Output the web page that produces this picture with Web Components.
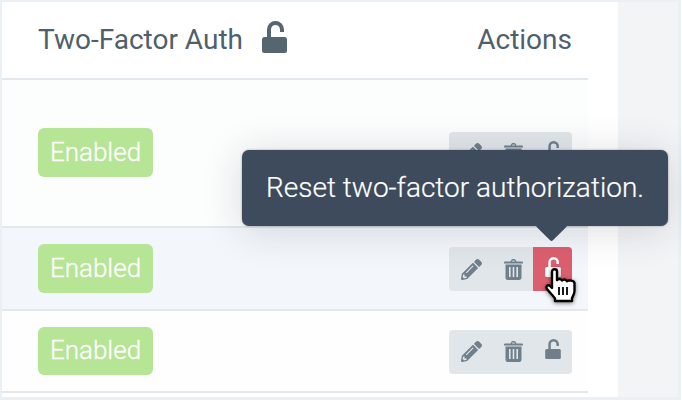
<!DOCTYPE html>
<html>
<head>
<meta charset="utf-8">
<style>
  html, body { margin: 0; height: 100%; background: #fff; }
  body { font-family: Roboto, "Liberation Sans", sans-serif; overflow: hidden; }
</style>
</head>
<body>
<auth-page>
  <auth-head></auth-head>
  <auth-row height="148" badge="49" style="--row-bg:#fcfdfd;--badge-nudge:1px"></auth-row>
  <auth-row height="83" badge="49" active style="--row-bg:#f3f6fa"></auth-row>
  <auth-row height="82" badge="48" style="--row-bg:#fefefe"></auth-row>
</auth-page>
<script>
const ICONS = {
  pencil: `<svg viewBox="0 0 512 512" width="21" height="21"><path fill="currentColor" d="M497.9 142.1l-46.1 46.1c-4.7 4.7-12.3 4.7-17 0l-111-111c-4.7-4.7-4.7-12.3 0-17l46.1-46.1c18.7-18.7 49.1-18.7 67.9 0l60.1 60.1c18.8 18.7 18.8 49.1 0 67.9zM284.2 99.8L21.6 362.4.4 483.9c-2.9 16.4 11.4 30.6 27.8 27.8l121.5-21.3 262.6-262.6c4.7-4.7 4.7-12.3 0-17l-111-111c-4.8-4.7-12.4-4.7-17.1 0zM124.1 339.9c-5.5-5.5-5.5-14.3 0-19.8l154-154c5.5-5.5 14.3-5.5 19.8 0s5.5 14.3 0 19.8l-154 154c-5.5 5.5-14.3 5.5-19.8 0zM88 424h48v36.3l-64.5 11.3-31.1-31.1L51.7 376H88v48z"/></svg>`,
  trash: `<svg viewBox="0 0 19 21" width="19" height="21"><path fill="currentColor" fill-rule="evenodd" d="M6.500 2.600 7.300 1C7.600.4 8.200 0 8.900 0h1.200c.7 0 1.300.4 1.600 1l.8 1.600h5.200c.7 0 1.300.4 1.300 1v.9H0v-.9c0-.6.6-1 1.300-1zM8 2.600h3l-.5-1.100H8.500zM1.500 5.500h16v13.300c0 1.200-.9 2.200-2 2.200h-12c-1.100 0-2-1-2-2.200zM5 8v10h1.600V8zm3.700 0v10h1.600V8zM12.400 8v10H14V8z"/></svg>`,
  lock: `<svg viewBox="0 0 25 32" width="25" height="32"><path fill="none" stroke="currentColor" stroke-width="4" d="M7 18V8.500a6.500 6.500 0 0 1 13 0V11"/><rect fill="currentColor" y="16" width="25" height="16" rx="2.500"/></svg>`,
  lockSmall: `<svg viewBox="0 0 25 32" width="16" height="20"><path fill="none" stroke="currentColor" stroke-width="4" d="M7 18V8.500a6.500 6.500 0 0 1 13 0V11"/><rect fill="currentColor" y="16" width="25" height="16" rx="2.500"/></svg>`
};

class AuthPage extends HTMLElement {
  constructor() {
    super();
    this.attachShadow({ mode: 'open' });
  }
  connectedCallback() {
    this.shadowRoot.innerHTML = `
      <style>
        :host { display: flex; padding: 2px 3px 3px 2px; height: 395px; width: 676px; background: #ebf0f5; }
        .card { width: 616px; background: #fff; flex: none; }
        .table { width: 586px; }
        .side { flex: 1; background: #f2f4f6; }
      </style>
      <div class="card"><div class="table"><slot></slot></div></div>
      <div class="side"></div>
    `;
  }
}

class AuthHead extends HTMLElement {
  constructor() {
    super();
    this.attachShadow({ mode: 'open' });
  }
  connectedCallback() {
    this.shadowRoot.innerHTML = `
      <style>
        :host {
          display: flex; align-items: center; justify-content: space-between;
          height: 76px; padding: 0 16px 0 36px;
          border-bottom: 2px solid #e3e8ec;
          color: #4f5f6b; font-size: 28px;
        }
        .title { display: flex; align-items: center; gap: 19px; }
        span { padding-bottom: 2px; }
        svg { display: block; color: #556670; margin-top: -6px; }
      </style>
      <div class="title"><span>Two-Factor Auth</span>${ICONS.lock}</div>
      <span>Actions</span>
    `;
  }
}

class AuthRow extends HTMLElement {
  constructor() {
    super();
    this.attachShadow({ mode: 'open' });
  }
  connectedCallback() {
    const height = this.getAttribute('height');
    const badge = this.getAttribute('badge');
    const active = this.hasAttribute('active');
    this.shadowRoot.innerHTML = `
      <style>
        :host {
          display: flex; align-items: center; justify-content: space-between;
          position: relative; box-sizing: border-box;
          height: ${height}px; padding: 0 16px 0 36px;
          background: var(--row-bg);
          border-bottom: 2px solid #e3e8ec;
        }
        .badge {
          display: flex; align-items: center; justify-content: center;
          box-sizing: border-box; padding-bottom: 2px;
          width: 115px; height: ${badge}px; border-radius: 6px;
          margin-bottom: var(--badge-nudge, 0);
          background: #b5e595; color: #fff; font-size: 26px; font-weight: 300;
          -webkit-text-stroke: .3px #fff;
        }
      </style>
      <div class="badge">Enabled</div>
      <auth-actions ${active ? 'active' : ''}></auth-actions>
      ${active ? '<auth-tooltip>Reset two-factor authorization.</auth-tooltip>' : ''}
    `;
  }
}

class AuthActions extends HTMLElement {
  constructor() {
    super();
    this.attachShadow({ mode: 'open' });
  }
  connectedCallback() {
    const active = this.hasAttribute('active');
    this.shadowRoot.innerHTML = `
      <style>
        :host {
          display: flex; position: relative; height: 44px; margin-top: 1.5px; border-radius: 4px;
          background: #e1e6ea; color: #6f7f8c;
        }
        .btn { display: flex; align-items: center; justify-content: center; width: 39px; }
        .btn.first { width: 45px; }
        .btn.last { border-radius: 0 4px 4px 0; }
        .btn.last svg { margin-top: -5px; }
        .btn.on { background: #dc5f6f; color: #fff; }
        .cursor { position: absolute; left: 96px; top: 21px; filter: drop-shadow(0 1px 2px rgba(0,0,0,.5)); }
      </style>
      <div class="btn first">${ICONS.pencil}</div>
      <div class="btn">${ICONS.trash}</div>
      <div class="btn last ${active ? 'on' : ''}">${ICONS.lockSmall}</div>
      ${active ? `<svg class="cursor" width="32" height="36" viewBox="0 0 32 36"><path fill="#fff" stroke="#000" stroke-width="2.400" stroke-linejoin="round" d="M7 3.500c0-3 5-3 5 0V12c1-1.500 4-1.500 5 .5 1-1.500 4-1.500 5 .8 1-1.200 7.500-1.200 7.500 2.200V23c0 3-1.500 5-2.500 7v3H10v-2.500c-2-3-5-5.500-8-9.500-1.500-2.500.5-5 3-3l2 2z"/><path stroke="#000" stroke-width="1.800" d="M14 19v8M18 19v8M22 19v8"/></svg>` : ''}
    `;
  }
}

class AuthTooltip extends HTMLElement {
  constructor() {
    super();
    this.attachShadow({ mode: 'open' });
  }
  connectedCallback() {
    this.shadowRoot.innerHTML = `
      <style>
        :host {
          position: absolute; left: 240px; top: -78px; z-index: 2;
          display: flex; align-items: center; justify-content: center;
          width: 426px; height: 76px; border-radius: 7px;
          background: #3d4b5c; color: #fff; font-size: 28px; font-weight: 300;
          -webkit-text-stroke: .2px #fff;
          box-shadow: 0 4px 40px rgba(30,40,50,.16), 0 0 2px rgba(30,40,50,.45);
          white-space: nowrap;
        }
        .arrow {
          position: absolute; left: 298px; bottom: -11px; width: 23px; height: 23px;
          background: #3d4b5c; transform: rotate(45deg); border-radius: 2px;
        }
        .text { position: relative; padding-bottom: 2px; }
      </style>
      <span class="arrow"></span>
      <span class="text"><slot></slot></span>
    `;
  }
}

customElements.define('auth-page', AuthPage);
customElements.define('auth-head', AuthHead);
customElements.define('auth-actions', AuthActions);
customElements.define('auth-tooltip', AuthTooltip);
customElements.define('auth-row', AuthRow);
</script>
</body>
</html>
